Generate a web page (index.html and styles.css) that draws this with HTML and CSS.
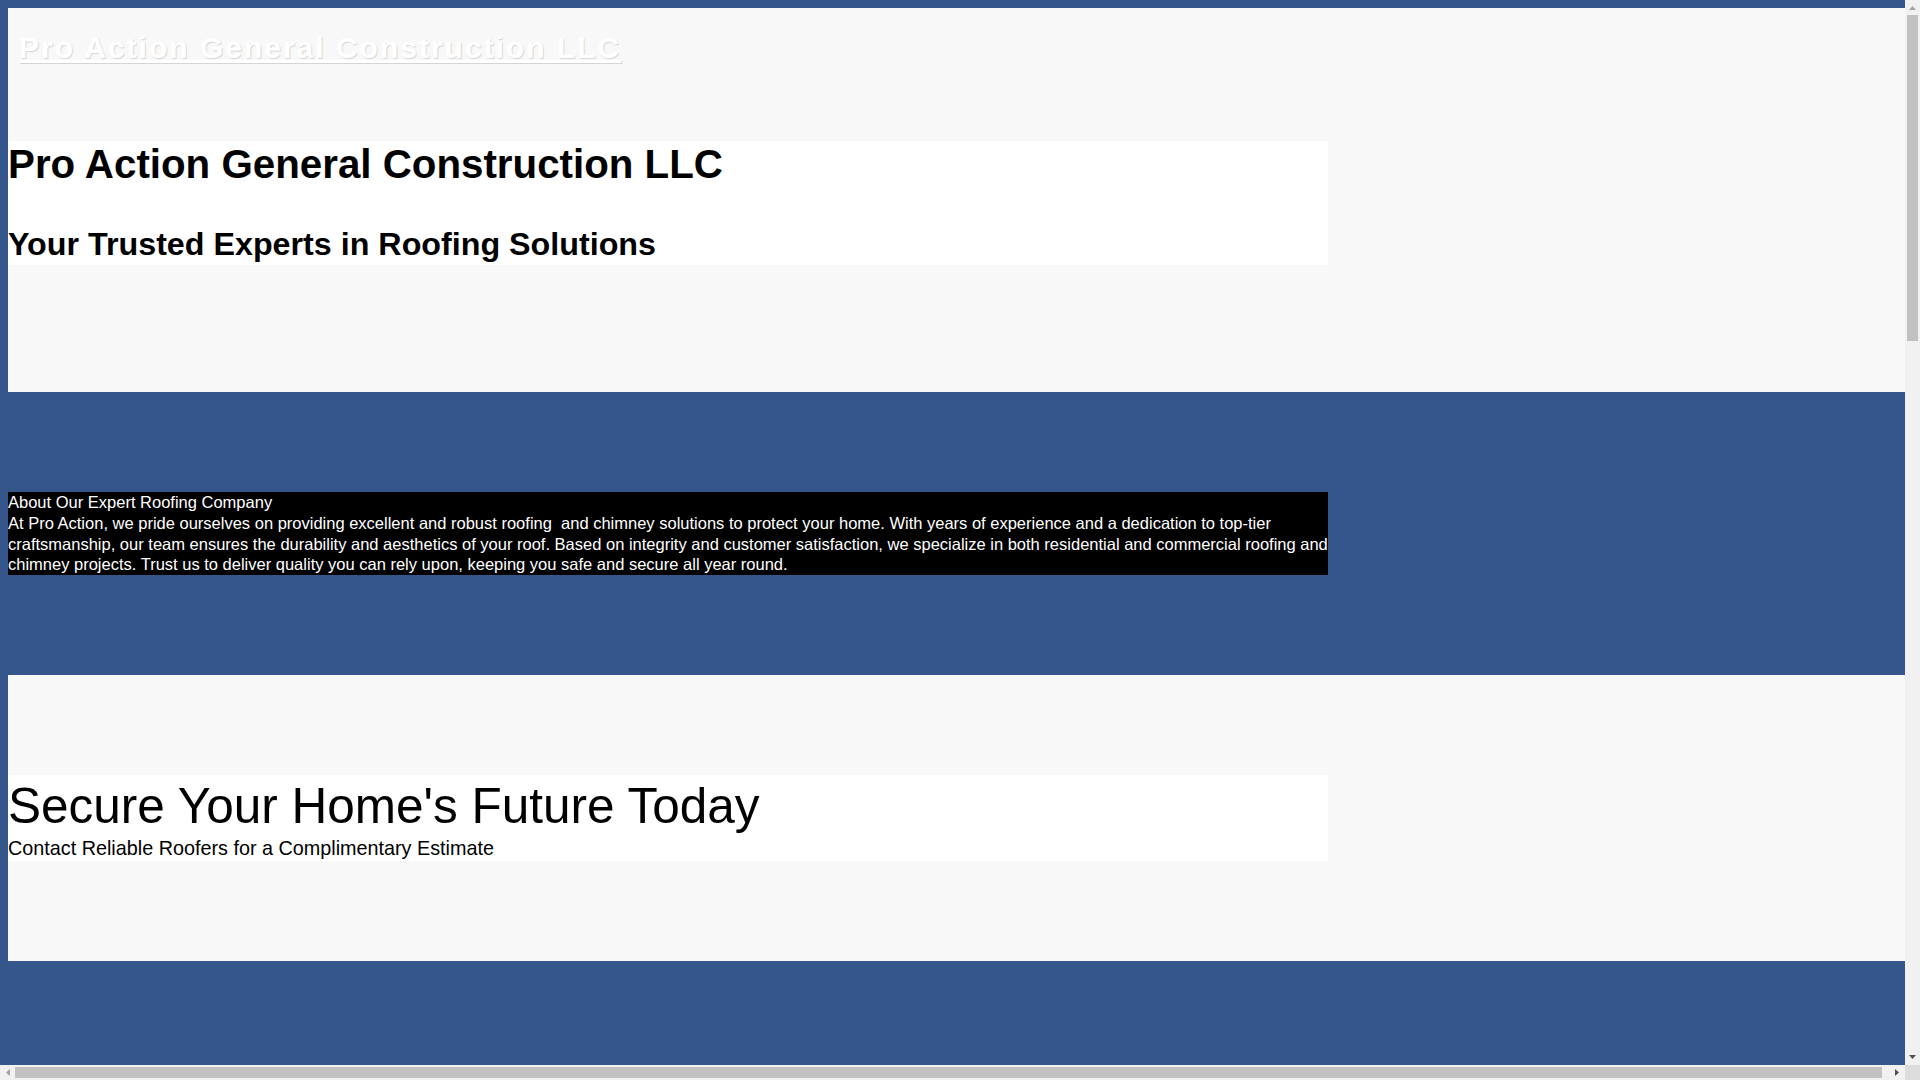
FILE: index.html
```html
<!DOCTYPE html>
<html lang="en">
<head>
<meta charset="utf-8">
<title>Pro Action General Construction LLC</title>
<link rel="stylesheet" href="styles.css">
</head>
<body>
  <section class="band band-light band-top">
    <div class="brand"><a class="brand-link" href="#">Pro Action General Construction LLC</a></div>
    <div class="box box-white hero">
      <h1 class="hero-title">Pro Action General Construction LLC</h1>
      <h2 class="hero-sub">Your Trusted Experts in Roofing Solutions</h2>
    </div>
  </section>

  <section class="band band-blue">
    <div class="box box-black about">
      <h3 class="about-title">About Our Expert Roofing Company</h3>
      <p class="about-text">At Pro Action, we pride ourselves on providing excellent and robust roofing&nbsp; and chimney solutions to protect your home. With years of experience and a dedication to top-tier craftsmanship, our team ensures the durability and aesthetics of your roof. Based on integrity and customer satisfaction, we specialize in both residential and commercial roofing and chimney projects. Trust us to deliver quality you can rely upon, keeping you safe and secure all year round.</p>
    </div>
  </section>

  <section class="band band-light">
    <div class="box box-white cta">
      <h2 class="cta-title">Secure Your Home's Future Today</h2>
      <p class="cta-sub">Contact Reliable Roofers for a Complimentary Estimate</p>
    </div>
  </section>

  <section class="band band-blue band-tail"></section>

  <div class="sb sb-v" aria-hidden="true">
    <svg class="sb-arrow sb-up" width="15" height="15" viewBox="0 0 15 15"><polygon points="4,10 11,10 7.5,6" fill="#a3a3a3"/></svg>
    <div class="sb-thumb-v"></div>
    <svg class="sb-arrow sb-down" width="15" height="15" viewBox="0 0 15 15"><polygon points="4,5 11,5 7.5,9" fill="#505050"/></svg>
  </div>
  <div class="sb sb-h" aria-hidden="true">
    <svg class="sb-arrow sb-left" width="15" height="15" viewBox="0 0 15 15"><polygon points="10,4 10,11 6,7.5" fill="#a3a3a3"/></svg>
    <div class="sb-thumb-h"></div>
    <svg class="sb-arrow sb-right" width="15" height="15" viewBox="0 0 15 15"><polygon points="5,4 5,11 9,7.5" fill="#505050"/></svg>
  </div>
  <div class="sb sb-corner" aria-hidden="true"></div>
</body>
</html>
```

FILE: styles.css
```css
html {
  background: #34568b;
}

body {
  margin: 8px 0 0 8px;
  width: 100%;
  font-family: "Liberation Sans", Arial, sans-serif;
  color: #000;
}

.band {
  padding: 100px 0;
}

.band-light {
  background: #f8f8f8;
}

.band-blue {
  background: #34568b;
}

.band-top {
  padding: 22px 0 127px;
}

.brand {
  padding-left: 11px;
  font-size: 30px;
  line-height: 35px;
  font-weight: bold;
  letter-spacing: 2px;
}

.brand-link {
  color: #ffffff;
  text-decoration: underline;
  text-shadow: 1px 1px 1px rgba(0, 0, 0, 0.14);
}

.box {
  width: 1320px;
}

.box-white {
  background: #ffffff;
}

.box-black {
  background: #000000;
  color: #ffffff;
}

.hero {
  margin-top: 76px;
}

.hero-title {
  margin: 0 0 34px;
  padding-top: 1px;
  font-size: 40.3px;
  line-height: 46px;
  font-weight: bold;
}

.hero-sub {
  margin: 0;
  padding-top: 2px;
  font-size: 32.25px;
  line-height: 41px;
  font-weight: bold;
}

.about {
  font-size: 16.5px;
  line-height: 20.75px;
}

.about-title {
  margin: 0;
  font-size: 16.5px;
  font-weight: normal;
}

.about-text {
  margin: 0;
}

.cta-title {
  margin: 0;
  font-size: 49.5px;
  line-height: 61px;
  font-weight: normal;
}

.cta-sub {
  margin: 0;
  font-size: 19.8px;
  line-height: 25.4px;
}

.band-tail {
  padding: 0;
  height: 2422px;
}

/* simulated browser scrollbars */
.sb {
  position: fixed;
  background: #f1f1f1;
  z-index: 10;
}

.sb-v {
  top: 0;
  right: 0;
  width: 15px;
  height: 1065px;
}

.sb-h {
  left: 0;
  bottom: 0;
  width: 1905px;
  height: 15px;
}

.sb-corner {
  right: 0;
  bottom: 0;
  width: 15px;
  height: 15px;
  background: #dcdcdc;
}

.sb-arrow {
  position: absolute;
  display: block;
}

.sb-up {
  top: 0;
  left: 0;
}

.sb-down {
  bottom: 0;
  left: 0;
}

.sb-left {
  top: 0;
  left: 0;
}

.sb-right {
  top: 0;
  right: 0;
}

.sb-thumb-v {
  position: absolute;
  top: 15px;
  left: 2px;
  width: 11px;
  height: 326px;
  background: #c1c1c1;
}

.sb-thumb-h {
  position: absolute;
  top: 2px;
  left: 15px;
  width: 1867px;
  height: 11px;
  background: #c1c1c1;
}
```
